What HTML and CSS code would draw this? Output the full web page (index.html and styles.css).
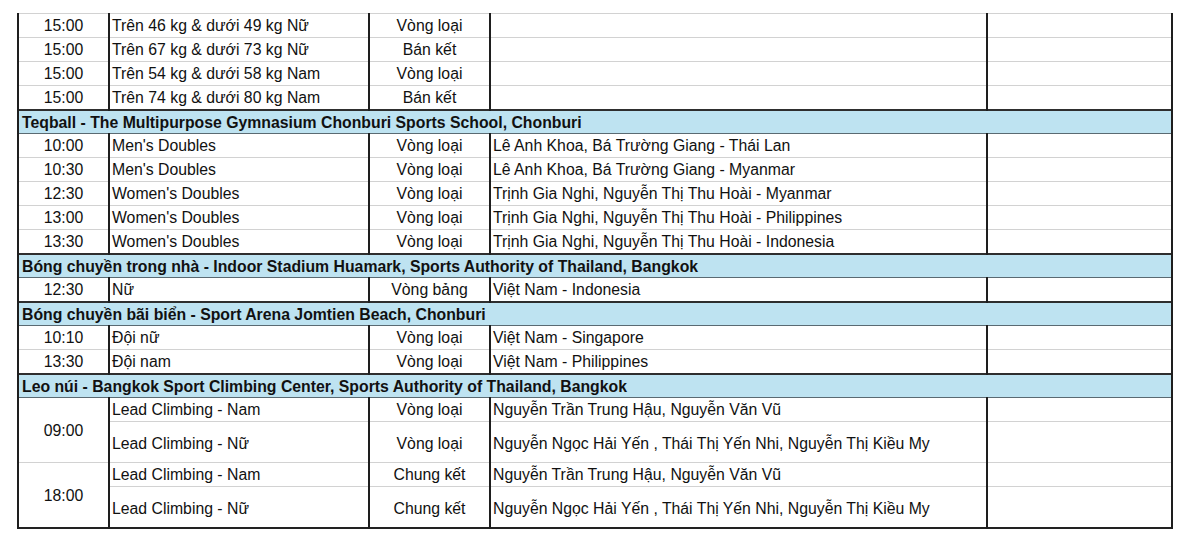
FILE: index.html
```html
<!DOCTYPE html>
<html lang="vi">
<head>
<meta charset="utf-8">
<link rel="stylesheet" href="styles.css">
</head>
<body>
<table class="sched">
  <colgroup>
    <col class="c-time"><col class="c-event"><col class="c-round"><col class="c-ath"><col class="c-note">
  </colgroup>
  <tbody>
    <tr><td class="t">15:00</td><td class="l">Trên 46 kg &amp; dưới 49 kg Nữ</td><td class="r">Vòng loại</td><td class="l"></td><td></td></tr>
    <tr><td class="t">15:00</td><td class="l">Trên 67 kg &amp; dưới 73 kg Nữ</td><td class="r">Bán kết</td><td class="l"></td><td></td></tr>
    <tr><td class="t">15:00</td><td class="l">Trên 54 kg &amp; dưới 58 kg Nam</td><td class="r">Vòng loại</td><td class="l"></td><td></td></tr>
    <tr><td class="t">15:00</td><td class="l">Trên 74 kg &amp; dưới 80 kg Nam</td><td class="r">Bán kết</td><td class="l"></td><td></td></tr>

    <tr class="hdr"><td colspan="5">Teqball - The Multipurpose Gymnasium Chonburi Sports School, Chonburi</td></tr>
    <tr><td class="t">10:00</td><td class="l">Men's Doubles</td><td class="r">Vòng loại</td><td class="l">Lê Anh Khoa, Bá Trường Giang - Thái Lan</td><td></td></tr>
    <tr><td class="t">10:30</td><td class="l">Men's Doubles</td><td class="r">Vòng loại</td><td class="l">Lê Anh Khoa, Bá Trường Giang - Myanmar</td><td></td></tr>
    <tr><td class="t">12:30</td><td class="l">Women's Doubles</td><td class="r">Vòng loại</td><td class="l">Trịnh Gia Nghi, Nguyễn Thị Thu Hoài - Myanmar</td><td></td></tr>
    <tr><td class="t">13:00</td><td class="l">Women's Doubles</td><td class="r">Vòng loại</td><td class="l">Trịnh Gia Nghi, Nguyễn Thị Thu Hoài - Philippines</td><td></td></tr>
    <tr><td class="t">13:30</td><td class="l">Women's Doubles</td><td class="r">Vòng loại</td><td class="l">Trịnh Gia Nghi, Nguyễn Thị Thu Hoài - Indonesia</td><td></td></tr>

    <tr class="hdr"><td colspan="5">Bóng chuyền trong nhà - Indoor Stadium Huamark, Sports Authority of Thailand, Bangkok</td></tr>
    <tr><td class="t">12:30</td><td class="l">Nữ</td><td class="r">Vòng bảng</td><td class="l">Việt Nam - Indonesia</td><td></td></tr>

    <tr class="hdr"><td colspan="5">Bóng chuyền bãi biển - Sport Arena Jomtien Beach, Chonburi</td></tr>
    <tr><td class="t">10:10</td><td class="l">Đội nữ</td><td class="r">Vòng loại</td><td class="l">Việt Nam - Singapore</td><td></td></tr>
    <tr><td class="t">13:30</td><td class="l">Đội nam</td><td class="r">Vòng loại</td><td class="l">Việt Nam - Philippines</td><td></td></tr>

    <tr class="hdr"><td colspan="5">Leo núi - Bangkok Sport Climbing Center, Sports Authority of Thailand, Bangkok</td></tr>
    <tr><td class="t" rowspan="2">09:00</td><td class="l">Lead Climbing - Nam</td><td class="r">Vòng loại</td><td class="l">Nguyễn Trần Trung Hậu, Nguyễn Văn Vũ</td><td></td></tr>
    <tr class="tall"><td class="l">Lead Climbing - Nữ</td><td class="r">Vòng loại</td><td class="l">Nguyễn Ngọc Hải Yến , Thái Thị Yến Nhi, Nguyễn Thị Kiều My</td><td></td></tr>
    <tr><td class="t" rowspan="2">18:00</td><td class="l">Lead Climbing - Nam</td><td class="r">Chung kết</td><td class="l">Nguyễn Trần Trung Hậu, Nguyễn Văn Vũ</td><td></td></tr>
    <tr class="tall last"><td class="l">Lead Climbing - Nữ</td><td class="r">Chung kết</td><td class="l">Nguyễn Ngọc Hải Yến , Thái Thị Yến Nhi, Nguyễn Thị Kiều My</td><td></td></tr>
  </tbody>
</table>
</body>
</html>
```
FILE: styles.css
```css
html, body {
  margin: 0;
  padding: 0;
  background: #ffffff;
}
body {
  padding: 13px 0 0 17px;
  font-family: "Liberation Sans", Arial, sans-serif;
  font-size: 15.8px;
  color: #111;
}
.sched {
  border-collapse: collapse;
  table-layout: fixed;
  width: 1156px;
  border-top: 1px solid #c8c8c8;
  border-left: 2px solid #222;
  border-right: 2px solid #333;
  border-bottom: 2px solid #222;
}
.c-time { width: 91px; }
.c-event { width: 260px; }
.c-round { width: 121px; }
.c-ath { width: 497px; }
.c-note { width: auto; }
.sched td {
  height: 22px;
  padding: 1px 2px 0 2px;
  line-height: 18px;
  border-top: 1px solid #d2d2d2;
  border-bottom: 1px solid #d2d2d2;
  border-left: 2px solid #1e1e1e;
  border-right: 2px solid #1e1e1e;
  white-space: nowrap;
  overflow: hidden;
  vertical-align: middle;
}
.sched td.t { text-align: center; }
.sched td.r { text-align: center; }
.sched td.l { text-align: left; }
.sched tr.tall td { height: 37px; padding-top: 3px; }
.sched tr.hdr td {
  background: #bee3f1;
  font-weight: bold;
  color: #111;
  border-top: 2px solid #2e2e2e;
  border-bottom: 1px solid #5a6a72;
  height: 21px;
  padding-left: 3px;
}
```
